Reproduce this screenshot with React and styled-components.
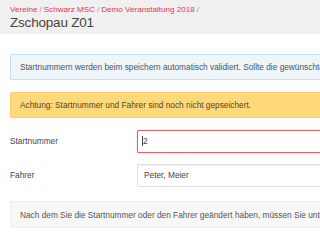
import React from "react";
import styled, { createGlobalStyle } from "styled-components";

const Global = createGlobalStyle`
  html, body { margin: 0; padding: 0; background: #fff; overflow: hidden; }
  body { font-family: "Liberation Sans", Arial, sans-serif; font-size: 8.3px; color: #333; }
  * { box-sizing: border-box; }
`;

const Page = styled.div`
  width: 320px;
  height: 240px;
  overflow: hidden;
`;

const Header = styled.header`
  background: #f0f0f0;
  height: 34px;
  padding: 4px 10px 0;
`;

const Crumbs = styled.div`
  font-size: 8.1px;
  line-height: 11px;
  white-space: nowrap;
  color: #999;
`;

const Crumb = styled.a`
  color: #e8334a;
  text-decoration: none;
`;

const Sep = styled.span`
  color: #999;
  margin: 0 2px;
`;

const Title = styled.h1`
  margin: 0;
  font-weight: normal;
  font-size: 13.5px;
  line-height: 16px;
  color: #444;
  letter-spacing: -0.2px;
`;

const Content = styled.main`
  padding: 20px 0 0 10px;
  display: flex;
  flex-direction: column;
`;

const Alert = styled.div`
  height: 26px;
  display: flex;
  align-items: center;
  padding-left: 9px;
  border: 1px solid ${(p) => (p.$kind === "warning" ? "#f6cf6a" : "#bfe0f5")};
  border-right: none;
  border-radius: 2px 0 0 2px;
  background: ${(p) => (p.$kind === "warning" ? "#fdd97c" : "#eef6fc")};
  color: ${(p) => (p.$kind === "warning" ? "#54462a" : "#4a5560")};
  white-space: nowrap;
  overflow: hidden;
  margin-bottom: ${(p) => p.$mb || 0}px;
`;

const FormRow = styled.div`
  display: grid;
  grid-template-columns: 127px 1fr;
  align-items: center;
  height: 24px;
  margin-bottom: ${(p) => p.$mb || 0}px;
`;

const Label = styled.label`
  color: #444;
`;

const Input = styled.div`
  height: 23px;
  border: 1px solid ${(p) => (p.$error ? "#e4606e" : "#ddd")};
  border-right: none;
  border-radius: 2px 0 0 2px;
  display: flex;
  align-items: center;
  padding-left: ${(p) => (p.$error ? 4 : 6)}px;
  color: #444;
  background: #fff;
  box-shadow: ${(p) => (p.$error ? "0 0 2px rgba(228,96,110,0.4)" : "inset 0 1px 1px rgba(0,0,0,0.05)")};
`;

const Caret = styled.span`
  display: inline-block;
  width: 1px;
  height: 10px;
  background: #444;
`;

const Well = styled.div`
  height: 27px;
  display: flex;
  align-items: center;
  padding-left: 9px;
  background: #f7f7f7;
  border: 1px solid #eee;
  border-right: none;
  border-radius: 2px 0 0 2px;
  color: #555;
  white-space: nowrap;
  overflow: hidden;
`;

export default function App() {
  return (
    <Page>
      <Global />
      <Header>
        <Crumbs>
          <Crumb>Vereine</Crumb>
          <Sep>/</Sep>
          <Crumb>Schwarz MSC</Crumb>
          <Sep>/</Sep>
          <Crumb>Demo Veranstaltung 2018</Crumb>
          <Sep>/</Sep>
        </Crumbs>
        <Title>Zschopau Z01</Title>
      </Header>
      <Content>
        <Alert $mb={12}>
          Startnummern werden beim speichern automatisch validiert. Sollte die gewünschte Startnummer bereits vergeben sein
        </Alert>
        <Alert $kind="warning" $mb={11}>
          Achtung: Startnummer und Fahrer sind noch nicht gepseichert.
        </Alert>
        <FormRow $mb={10}>
          <Label>Startnummer</Label>
          <Input $error>
            <Caret />2
          </Input>
        </FormRow>
        <FormRow $mb={14}>
          <Label>Fahrer</Label>
          <Input>Peter, Meier</Input>
        </FormRow>
        <Well>
          Nach dem Sie die Startnummer oder den Fahrer geändert haben, müssen Sie unten auf speichern klicken.
        </Well>
      </Content>
    </Page>
  );
}
